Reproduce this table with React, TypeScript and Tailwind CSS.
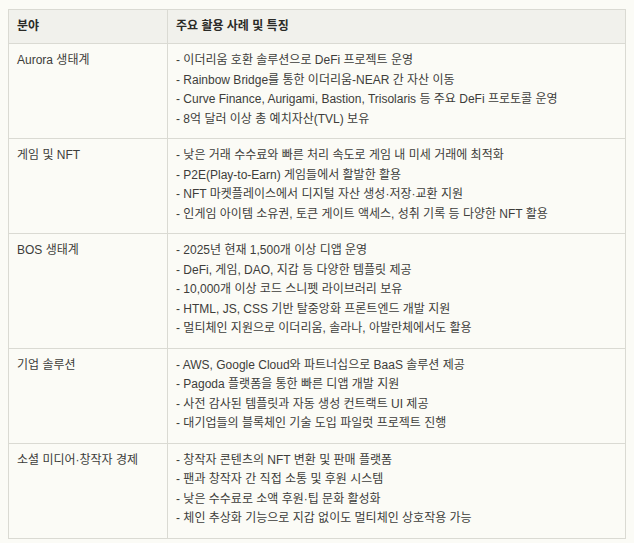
import React from "react";

const rows: { area: string; items: string[] }[] = [
  {
    area: "Aurora 생태계",
    items: [
      "이더리움 호환 솔루션으로 DeFi 프로젝트 운영",
      "Rainbow Bridge를 통한 이더리움-NEAR 간 자산 이동",
      "Curve Finance, Aurigami, Bastion, Trisolaris 등 주요 DeFi 프로토콜 운영",
      "8억 달러 이상 총 예치자산(TVL) 보유",
    ],
  },
  {
    area: "게임 및 NFT",
    items: [
      "낮은 거래 수수료와 빠른 처리 속도로 게임 내 미세 거래에 최적화",
      "P2E(Play-to-Earn) 게임들에서 활발한 활용",
      "NFT 마켓플레이스에서 디지털 자산 생성·저장·교환 지원",
      "인게임 아이템 소유권, 토큰 게이트 액세스, 성취 기록 등 다양한 NFT 활용",
    ],
  },
  {
    area: "BOS 생태계",
    items: [
      "2025년 현재 1,500개 이상 디앱 운영",
      "DeFi, 게임, DAO, 지갑 등 다양한 템플릿 제공",
      "10,000개 이상 코드 스니펫 라이브러리 보유",
      "HTML, JS, CSS 기반 탈중앙화 프론트엔드 개발 지원",
      "멀티체인 지원으로 이더리움, 솔라나, 아발란체에서도 활용",
    ],
  },
  {
    area: "기업 솔루션",
    items: [
      "AWS, Google Cloud와 파트너십으로 BaaS 솔루션 제공",
      "Pagoda 플랫폼을 통한 빠른 디앱 개발 지원",
      "사전 감사된 템플릿과 자동 생성 컨트랙트 UI 제공",
      "대기업들의 블록체인 기술 도입 파일럿 프로젝트 진행",
    ],
  },
  {
    area: "소셜 미디어·창작자 경제",
    items: [
      "창작자 콘텐츠의 NFT 변환 및 판매 플랫폼",
      "팬과 창작자 간 직접 소통 및 후원 시스템",
      "낮은 수수료로 소액 후원·팁 문화 활성화",
      "체인 추상화 기능으로 지갑 없이도 멀티체인 상호작용 가능",
    ],
  },
];

export default function App() {
  return (
    <div
      className="min-h-[543px] w-[634px] bg-[#fbfbf6] pl-2 pr-2 pt-[9px] text-[12px] text-[#3d3d3a]"
      style={{ fontFamily: '"Liberation Sans", "Noto Sans CJK KR", sans-serif' }}
    >
      <table className="w-[618px] border-collapse border border-[#dadad3]">
        <thead>
          <tr className="bg-[#f1f1ec]">
            <th className="w-[159px] border border-[#dadad3] px-2 py-[7px] text-left font-bold leading-[19px] text-[#2a2a27]">
              분야
            </th>
            <th className="border border-[#dadad3] px-2 py-[7px] text-left font-bold leading-[19px] text-[#2a2a27]">
              주요 활용 사례 및 특징
            </th>
          </tr>
        </thead>
        <tbody>
          {rows.map((r) => (
            <tr key={r.area}>
              <td className="border border-[#dadad3] px-2 pt-[7px] pb-[9px] align-top leading-[19.5px]">
                {r.area}
              </td>
              <td className="border border-[#dadad3] px-2 pt-[7px] pb-[9px] align-top leading-[19.5px]">
                {r.items.map((it) => (
                  <div key={it}>- {it}</div>
                ))}
              </td>
            </tr>
          ))}
        </tbody>
      </table>
    </div>
  );
}
